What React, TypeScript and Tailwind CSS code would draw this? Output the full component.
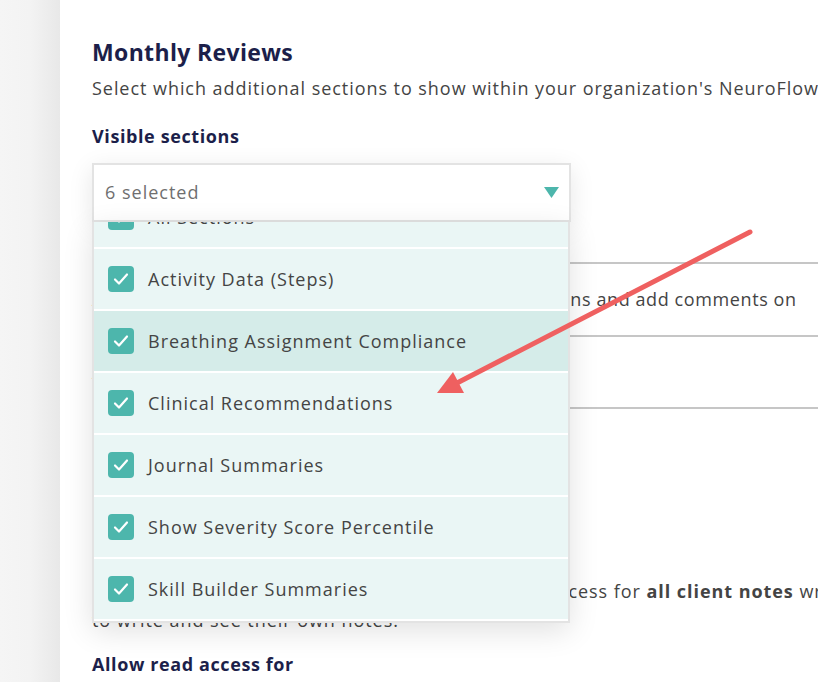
import React from 'react';

const sections = [
  'All Sections',
  'Activity Data (Steps)',
  'Breathing Assignment Compliance',
  'Clinical Recommendations',
  'Journal Summaries',
  'Show Severity Score Percentile',
  'Skill Builder Summaries',
];

const CheckBox: React.FC = () => (
  <span className="flex h-[26px] w-[26px] shrink-0 items-center justify-center rounded-[4px] bg-[#4db6ac]">
    <svg width="18" height="18" viewBox="0 0 18 18" fill="none">
      <path d="M3 9.5l4 4 8-9" stroke="white" strokeWidth="2.2" strokeLinecap="round" strokeLinejoin="round" />
    </svg>
  </span>
);

const SectionRow: React.FC<{ label: string; active?: boolean }> = ({ label, active }) => (
  <div
    className={`flex h-[60px] items-center gap-[14px] pl-[14px] ${active ? 'bg-[#d5ece9]' : 'bg-[#eaf6f5]'}`}
  >
    <CheckBox />
    <span className="text-[18px] tracking-[1px] text-[#444444]">{label}</span>
  </div>
);

export default function App() {
  return (
    <div className="relative flex h-[682px] w-[818px] overflow-hidden bg-white font-['Open_Sans','Liberation_Sans',sans-serif]">
      <div className="w-[60px] shrink-0 bg-gradient-to-r from-[#f5f5f5] via-[#f3f3f3] to-[#e8e8e8]" />

      <div className="min-w-0 flex-1 pl-[32px] pt-[36px]">
        <h2 className="text-[23px] font-bold leading-[32px] tracking-[0.35px] text-[#1c1f4a]">Monthly Reviews</h2>
        <p className="mt-[7px] whitespace-nowrap text-[18px] leading-[26px] tracking-[0.95px] text-[#444444]">
          Select which additional sections to show within your organization's NeuroFlow monthly review reports.
        </p>
        <h3 className="mt-[22px] text-[18px] font-bold leading-[26px] tracking-[0.6px] text-[#1c1f4a]">Visible sections</h3>

        <div className="relative mt-[14px] w-[479px]">
          <div className="flex h-[59px] items-center justify-between border-2 border-[#e3e3e3] bg-white pl-[11px] pr-[10px] shadow-[0_6px_24px_rgba(0,0,0,0.10)]">
            <span className="text-[18px] tracking-[1px] text-[#6f6f6f]">6 selected</span>
            <svg width="15" height="11" viewBox="0 0 15 11">
              <polygon points="0,0 15,0 7.5,11" fill="#4db6ac" />
            </svg>
          </div>

          <div className="absolute left-0 top-full z-10 h-[401px] w-[478px] overflow-hidden border-x-2 border-b-2 border-[#e3e3e3] bg-white shadow-[0_8px_28px_rgba(0,0,0,0.12)]">
            <div className="-mt-[35px] flex flex-col gap-[2px]">
              {sections.map((s) => (
                <SectionRow key={s} label={s} active={s === 'Breathing Assignment Compliance'} />
              ))}
            </div>
          </div>
        </div>

        <div className="mt-[40px] h-[2px] bg-[#c6c6c6]" />
        <div className="flex h-[71px] items-center whitespace-nowrap text-[18px] tracking-[0.6px] text-[#444444]">
          Allow providers to view and edit each client's care plans and add comments on
        </div>
        <div className="h-[2px] bg-[#c6c6c6]" />
        <div className="flex h-[70px] items-center whitespace-nowrap text-[18px] tracking-[0.95px] text-[#444444]">
          Allow providers to edit client goals
        </div>
        <div className="h-[2px] bg-[#c6c6c6]" />

        <h3 className="mt-[40px] text-[18px] font-bold leading-[26px] text-[#1c1f4a]">Clinical Notes</h3>
        <p className="mt-[102px] whitespace-nowrap text-[18px] leading-[29px] tracking-[0.95px] text-[#444444]">
          Providers in your organization can be given read access for <b className="font-bold">all client notes</b> written by other providers.
          <br />
          to write and see their own notes.
        </p>
        <h3 className="mt-[16px] text-[18px] font-bold leading-[26px] tracking-[0.6px] text-[#1c1f4a]">Allow read access for</h3>
      </div>

      <svg className="pointer-events-none absolute inset-0 z-20" width="818" height="682">
        <line x1="750" y1="232" x2="457" y2="383" stroke="#ef6060" strokeWidth="5" strokeLinecap="round" />
        <polygon points="437,393 453,372 464,393" fill="#ef6060" />
      </svg>
    </div>
  );
}
